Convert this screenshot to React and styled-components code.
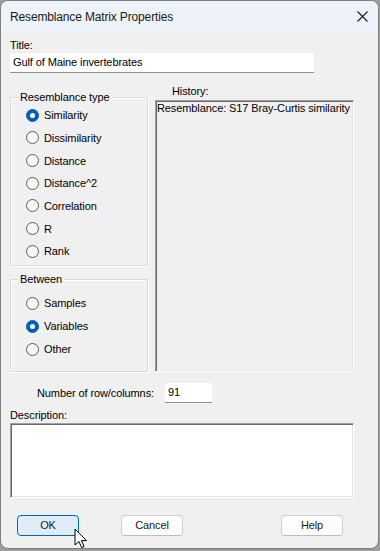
import React from "react";
import styled, { createGlobalStyle } from "styled-components";

const Global = createGlobalStyle`
  html, body { margin: 0; padding: 0; background: #9c9c9c; }
  body { width: 380px; height: 551px; overflow: hidden; }
`;

const Window = styled.div`
  box-sizing: border-box;
  position: relative;
  width: 379px;
  height: 549px;
  background: #f0f0f0;
  border: 1px solid #7f7f7f;
  border-radius: 8px;
  overflow: hidden;
  display: flex;
  flex-direction: column;
  font-family: "Liberation Sans", Arial, sans-serif;
  font-size: 11px;
  letter-spacing: -0.1px;
  color: #000;
`;

const TitleBar = styled.div`
  height: 31px;
  flex: none;
  background: #eef3f9;
  display: flex;
  align-items: center;
  justify-content: space-between;
  padding: 0 10px 0 9px;
  font-size: 12px;
  letter-spacing: -0.15px;
  color: #1a1a1a;
`;

const Body = styled.div`
  display: flex;
  flex-direction: column;
  padding: 0 24px 0 9px;
`;

const Label = styled.div`
  line-height: 13px;
  margin-top: ${(p) => p.$mt || 0}px;
  padding-left: ${(p) => p.$pl || 0}px;
`;

const TextBox = styled.div`
  box-sizing: border-box;
  width: ${(p) => p.$w}px;
  height: 20px;
  margin-top: ${(p) => p.$mt || 0}px;
  background: #fff;
  border-bottom: 1px solid #8f8f8f;
  padding: 0 3px;
  display: flex;
  align-items: center;
  line-height: 13px;
  white-space: nowrap;
`;

const MainRow = styled.div`
  display: flex;
  gap: 7px;
  margin-top: 12px;
`;

const LeftCol = styled.div`
  display: flex;
  flex-direction: column;
  width: 138px;
  padding-top: 12px;
`;

const Group = styled.div`
  box-sizing: border-box;
  width: 138px;
  border: 1px solid #d9d9d9;
  box-shadow: inset 1px 1px 0 #ffffff, 1px 1px 0 #ffffff;
  margin-top: ${(p) => p.$mt || 0}px;
  padding: 0 0 ${(p) => p.$pb || 0}px 15px;
  display: flex;
  flex-direction: column;
`;

const Legend = styled.div`
  width: fit-content;
  margin: -7px 0 ${(p) => p.$gap || 0}px -8px;
  padding: 0 2px;
  background: #f0f0f0;
  line-height: 13px;
`;

const RadioRow = styled.div`
  height: ${(p) => p.$h}px;
  display: flex;
  align-items: center;
  gap: 5px;
`;

const RadioDot = styled.span`
  box-sizing: border-box;
  width: 13px;
  height: 13px;
  border-radius: 50%;
  flex: none;
  display: flex;
  align-items: center;
  justify-content: center;
  background: ${(p) => (p.$on ? "#005fb8" : "#f7f7f7")};
  border: 1px solid ${(p) => (p.$on ? "#005fb8" : "#5d5d5d")};
  &::after {
    content: "";
    display: ${(p) => (p.$on ? "block" : "none")};
    width: 5px;
    height: 5px;
    border-radius: 50%;
    background: #fff;
  }
`;

const RightCol = styled.div`
  display: flex;
  flex-direction: column;
  width: 199px;
`;

const Sunken = styled.div`
  box-sizing: border-box;
  width: ${(p) => p.$w}px;
  height: ${(p) => p.$h}px;
  margin-top: ${(p) => p.$mt || 0}px;
  background: ${(p) => p.$bg};
  border-style: solid;
  border-width: 1px;
  border-color: #a0a0a0 #ffffff #ffffff #a0a0a0;
  box-shadow: inset 1px 1px 0 #696969, inset -1px -1px 0 #e3e3e3;
  padding: 1px 1px;
  line-height: 13px;
  white-space: nowrap;
  overflow: hidden;
`;

const NumberRow = styled.div`
  display: flex;
  align-items: center;
  gap: 11px;
  margin-top: 11px;
`;

const RightLabel = styled.div`
  width: 144px;
  text-align: right;
  line-height: 13px;
`;

const ButtonRow = styled.div`
  display: flex;
  margin-top: 17px;
`;

const Button = styled.div`
  box-sizing: border-box;
  width: 62px;
  height: 21px;
  margin-left: ${(p) => p.$ml}px;
  border-radius: 4px;
  border: 1px solid ${(p) => (p.$primary ? "#0067c0" : "#d0d0d0")};
  border-bottom-color: ${(p) => (p.$primary ? "#0067c0" : "#bcbcbc")};
  background: ${(p) => (p.$primary ? "#e0ecf8" : "#fdfdfd")};
  display: flex;
  align-items: center;
  justify-content: center;
  line-height: 13px;
  color: #1a1a1a;
`;

const Cursor = styled.svg`
  position: absolute;
  left: 73px;
  top: 527px;
`;

const CloseIcon = () => (
  <svg width="11" height="11" viewBox="0 0 11 11">
    <path d="M0.5 0.5 L10.5 10.5 M10.5 0.5 L0.5 10.5" stroke="#1a1a1a" strokeWidth="1.1" fill="none" />
  </svg>
);

const types = ["Similarity", "Dissimilarity", "Distance", "Distance^2", "Correlation", "R", "Rank"];
const between = ["Samples", "Variables", "Other"];

export default function App() {
  return (
    <>
      <Global />
      <Window>
        <TitleBar>
          <span>Resemblance Matrix Properties</span>
          <CloseIcon />
        </TitleBar>
        <Body>
          <Label $mt={7}>Title:</Label>
          <TextBox $w={304} $mt={1}>Gulf of Maine invertebrates</TextBox>
          <MainRow>
            <LeftCol>
              <Group $pb={2}>
                <Legend>Resemblance type</Legend>
                {types.map((t, i) => (
                  <RadioRow key={t} $h={22.67}>
                    <RadioDot $on={i === 0} />
                    {t}
                  </RadioRow>
                ))}
              </Group>
              <Group $mt={13} $pb={10}>
                <Legend $gap={6}>Between</Legend>
                {between.map((t, i) => (
                  <RadioRow key={t} $h={23}>
                    <RadioDot $on={i === 1} />
                    {t}
                  </RadioRow>
                ))}
              </Group>
            </LeftCol>
            <RightCol>
              <Label $pl={17}>History:</Label>
              <Sunken $w={199} $h={272} $mt={2} $bg="#f0f0f0">
                Resemblance: S17 Bray-Curtis similarity
              </Sunken>
            </RightCol>
          </MainRow>
          <NumberRow>
            <RightLabel>Number of row/columns:</RightLabel>
            <TextBox $w={47}>91</TextBox>
          </NumberRow>
          <Label $mt={6}>Description:</Label>
          <Sunken $w={344} $h={75} $mt={1} $bg="#ffffff" />
          <ButtonRow>
            <Button $primary $ml={7}>OK</Button>
            <Button $ml={42}>Cancel</Button>
            <Button $ml={98}>Help</Button>
          </ButtonRow>
        </Body>
        <Cursor width="14" height="22" viewBox="0 0 14 22">
          <path
            d="M1 1 L1 17 L5 13.5 L7.6 19.6 L10 18.6 L7.5 12.6 L12.5 12.6 Z"
            fill="#fff"
            stroke="#000"
            strokeWidth="1"
            strokeLinejoin="miter"
          />
        </Cursor>
      </Window>
    </>
  );
}
